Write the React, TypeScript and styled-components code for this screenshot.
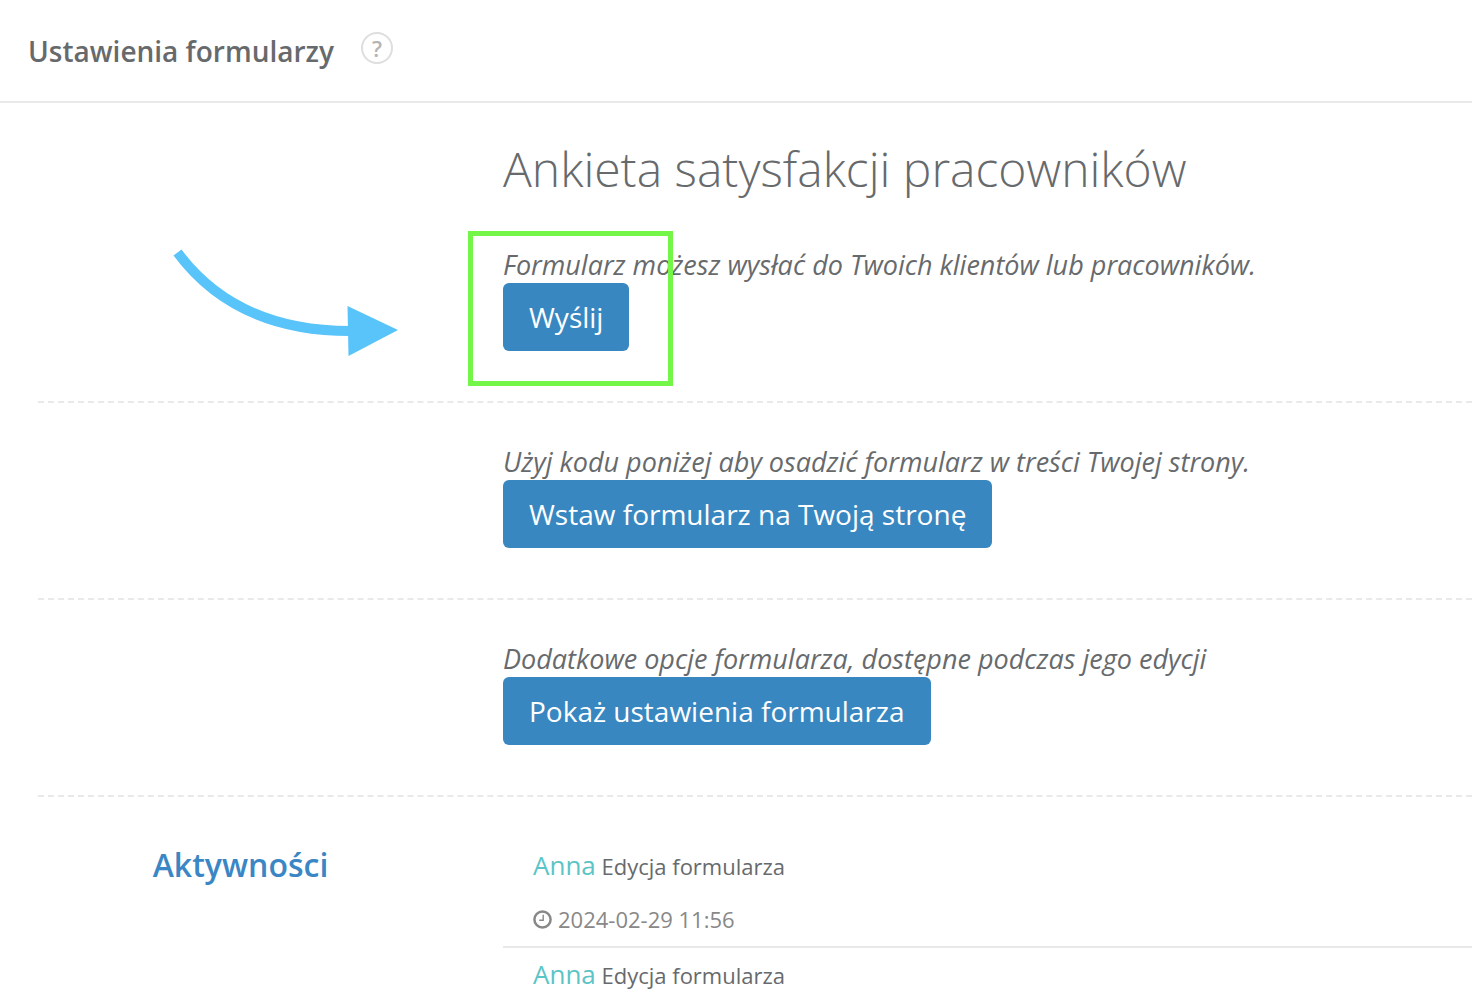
import React from "react";
import styled, { createGlobalStyle } from "styled-components";

const GlobalStyle = createGlobalStyle`
  *, *::before, *::after { box-sizing: border-box; }
  body {
    margin: 0;
    background: #fff;
    color: #676a6c;
    font-family: "Open Sans", "Noto Sans", sans-serif;
    font-size: 26px;
  }
  h1, h2, h3, p, ul { margin: 0; padding: 0; }
`;

const Header = styled.header`
  display: flex;
  align-items: flex-start;
  gap: 27px;
  padding: 32px 28px 31px;
  border-bottom: 2px solid #e9e9e9;
`;

const HeaderTitle = styled.h1`
  font-size: 28px;
  font-weight: 600;
  line-height: 38px;
`;

const HelpButton = styled.button`
  width: 32px;
  height: 32px;
  padding: 0;
  border: 2px solid #dedede;
  border-radius: 50%;
  background: #fff;
  color: #b4b4b4;
  font: 600 22px/28px "Open Sans", "Noto Sans", sans-serif;
  cursor: pointer;
`;

const Main = styled.main`
  padding-left: 38px;
`;

const Section = styled.section`
  display: grid;
  grid-template-columns: 465px minmax(0, 1fr);
  padding: 40px 0 50px;
  border-bottom: 2px dashed #e9e9e9;

  &:last-child {
    padding: 42px 0 0;
    border-bottom: 0;
  }
`;

const Side = styled.div`
  position: relative;
  padding-right: 60px;
  text-align: center;
`;

const SideTitle = styled.h3`
  color: #3b86c4;
  font-size: 32px;
  font-weight: 600;
  line-height: 52px;
`;

const Content = styled.div`
  grid-column: 2;
`;

const FormTitle = styled.h2`
  margin-bottom: 52px;
  font-size: 48px;
  font-weight: 300;
  line-height: 51px;
`;

const Hint = styled.p`
  font-size: 27px;
  font-style: italic;
  line-height: 37px;
`;

const ButtonHolder = styled.div`
  position: relative;
  width: fit-content;
`;

const PrimaryButton = styled.button`
  display: block;
  height: 68px;
  padding: 0 26px;
  border: 0;
  border-radius: 6px;
  background: #3887c1;
  color: #fff;
  font: 400 28px/40px "Open Sans", "Noto Sans", sans-serif;
  cursor: pointer;
`;

const Highlight = styled.span`
  position: absolute;
  inset: -52px -44px -35px -35px;
  border: 5px solid #73f647;
  pointer-events: none;
`;

const Arrow = styled.svg`
  position: absolute;
  top: 105px;
  left: 134px;
  width: 228px;
  height: 110px;
  pointer-events: none;
`;

const ActivityList = styled.ul`
  list-style: none;
`;

const Activity = styled.li`
  padding: 0 30px 8px;
  border-bottom: 2px solid #e9e9e9;

  &:last-child {
    padding-bottom: 0;
    border-bottom: 0;
  }
`;

const ActivityText = styled.p`
  font-size: 22px;
  line-height: 54px;
`;

const Author = styled.a`
  color: #5ac4c6;
  font-size: 26px;
  line-height: 37px;
  text-decoration: none;
`;

const Timestamp = styled.time`
  display: flex;
  align-items: center;
  gap: 6px;
  margin-top: 8px;
  color: #888;
  font-size: 22px;
  line-height: 37px;
`;

const Clock = () => (
  <svg width="19" height="19" viewBox="0 0 19 19" fill="none" stroke="currentColor" aria-hidden="true">
    <circle cx="9.5" cy="9.5" r="8.1" strokeWidth="2.5" />
    <path d="M10.2 4.8v5.4H6.2" strokeWidth="1.4" />
  </svg>
);

type ActivityItem = { author: string; action: string; date?: string };

const activities: ActivityItem[] = [
  { author: "Anna", action: "Edycja formularza", date: "2024-02-29 11:56" },
  { author: "Anna", action: "Edycja formularza" },
];

export default function App() {
  return (
    <>
      <GlobalStyle />
      <Header>
        <HeaderTitle>Ustawienia formularzy</HeaderTitle>
        <HelpButton type="button">?</HelpButton>
      </Header>
      <Main>
        <Section>
          <Side>
            <Arrow viewBox="0 0 228 110" aria-hidden="true">
              <path d="M5.500 4.500C43 55 100 83 178 83" fill="none" stroke="#58c4fa" strokeWidth="10" />
              <path d="M175.500 58L226 82L176.500 108Z" fill="#58c4fa" />
            </Arrow>
          </Side>
          <Content>
            <FormTitle>Ankieta satysfakcji pracowników</FormTitle>
            <Hint>Formularz możesz wysłać do Twoich klientów lub pracowników.</Hint>
            <ButtonHolder>
              <PrimaryButton type="button">Wyślij</PrimaryButton>
              <Highlight />
            </ButtonHolder>
          </Content>
        </Section>
        <Section>
          <Content>
            <Hint>Użyj kodu poniżej aby osadzić formularz w treści Twojej strony.</Hint>
            <PrimaryButton type="button">Wstaw formularz na Twoją stronę</PrimaryButton>
          </Content>
        </Section>
        <Section>
          <Content>
            <Hint>Dodatkowe opcje formularza, dostępne podczas jego edycji</Hint>
            <PrimaryButton type="button">Pokaż ustawienia formularza</PrimaryButton>
          </Content>
        </Section>
        <Section>
          <Side>
            <SideTitle>Aktywności</SideTitle>
          </Side>
          <Content>
            <ActivityList>
              {activities.map((item, index) => (
                <Activity key={index}>
                  <ActivityText>
                    <Author href="#">{item.author}</Author> {item.action}
                  </ActivityText>
                  {item.date && (
                    <Timestamp>
                      <Clock />
                      {item.date}
                    </Timestamp>
                  )}
                </Activity>
              ))}
            </ActivityList>
          </Content>
        </Section>
      </Main>
    </>
  );
}
